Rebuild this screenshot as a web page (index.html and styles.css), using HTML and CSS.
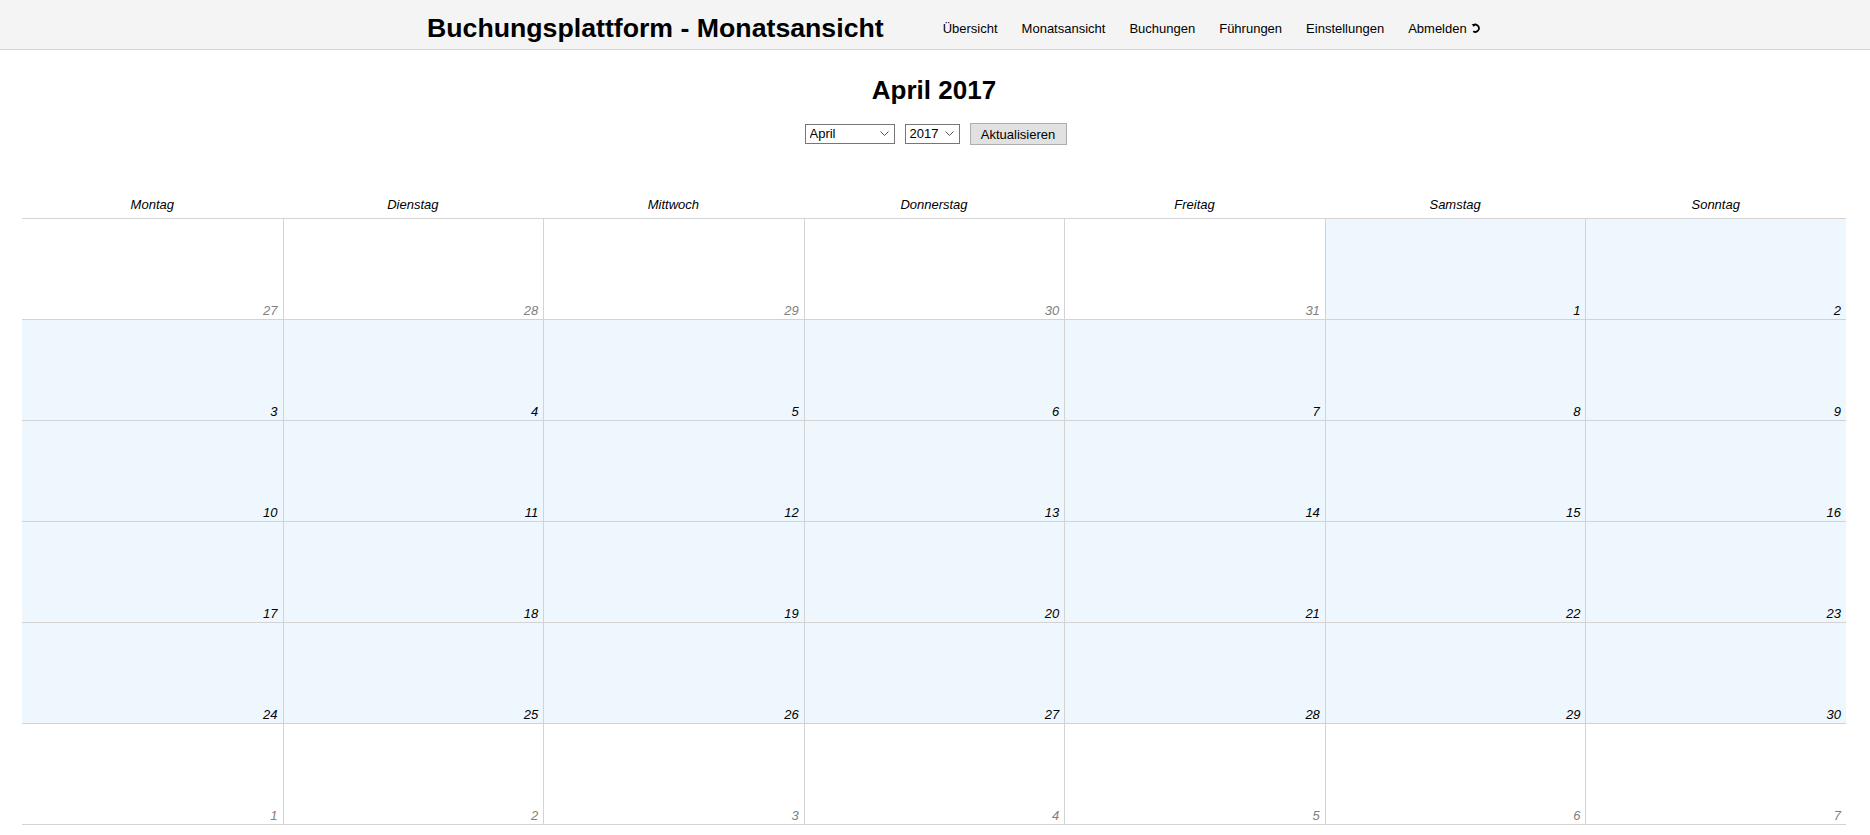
FILE: index.html
```html
<!DOCTYPE html>
<html lang="de">
<head>
<meta charset="utf-8">
<title>Buchungsplattform - Monatsansicht</title>
<link rel="stylesheet" href="styles.css">
</head>
<body>
<header class="topbar">
  <div class="topbar-inner">
    <div class="brand">Buchungsplattform - Monatsansicht</div>
    <nav class="nav">
      <a href="#">Übersicht</a>
      <a href="#">Monatsansicht</a>
      <a href="#">Buchungen</a>
      <a href="#">Führungen</a>
      <a href="#">Einstellungen</a>
      <a href="#">Abmelden <svg class="logout" width="10" height="10" viewBox="0 0 10 10" aria-hidden="true"><path d="M2.2 2.3 A3.6 3.6 0 1 1 2.2 8.2" fill="none" stroke="#000" stroke-width="1.7"/><path d="M0.6 1.2 L4.2 0.9 L3.0 4.0 Z" fill="#000"/></svg></a>
    </nav>
  </div>
</header>
<main class="page">
  <h1 class="month-title">April 2017</h1>
  <form class="controls">
    <span class="sel-wrap">
      <select class="sel sel-month">
        <option>Januar</option><option>Februar</option><option>März</option>
        <option selected>April</option><option>Mai</option><option>Juni</option>
        <option>Juli</option><option>August</option><option>September</option>
        <option>Oktober</option><option>November</option><option>Dezember</option>
      </select>
      <svg class="chev" width="9" height="5" viewBox="0 0 9 5" aria-hidden="true"><polyline points="0.5,0.5 4.5,4.5 8.5,0.5" fill="none" stroke="#555" stroke-width="1"/></svg>
    </span>
    <span class="sel-wrap">
      <select class="sel sel-year">
        <option>2016</option><option selected>2017</option><option>2018</option>
      </select>
      <svg class="chev" width="9" height="5" viewBox="0 0 9 5" aria-hidden="true"><polyline points="0.5,0.5 4.5,4.5 8.5,0.5" fill="none" stroke="#555" stroke-width="1"/></svg>
    </span>
    <button type="button" class="btn">Aktualisieren</button>
  </form>
  <div class="weekdays">
    <div>Montag</div><div>Dienstag</div><div>Mittwoch</div><div>Donnerstag</div><div>Freitag</div><div>Samstag</div><div>Sonntag</div>
  </div>
  <div class="calendar">
    <div class="cell other"><span>27</span></div>
    <div class="cell other"><span>28</span></div>
    <div class="cell other"><span>29</span></div>
    <div class="cell other"><span>30</span></div>
    <div class="cell other"><span>31</span></div>
    <div class="cell cur"><span>1</span></div>
    <div class="cell cur"><span>2</span></div>

    <div class="cell cur"><span>3</span></div>
    <div class="cell cur"><span>4</span></div>
    <div class="cell cur"><span>5</span></div>
    <div class="cell cur"><span>6</span></div>
    <div class="cell cur"><span>7</span></div>
    <div class="cell cur"><span>8</span></div>
    <div class="cell cur"><span>9</span></div>

    <div class="cell cur"><span>10</span></div>
    <div class="cell cur"><span>11</span></div>
    <div class="cell cur"><span>12</span></div>
    <div class="cell cur"><span>13</span></div>
    <div class="cell cur"><span>14</span></div>
    <div class="cell cur"><span>15</span></div>
    <div class="cell cur"><span>16</span></div>

    <div class="cell cur"><span>17</span></div>
    <div class="cell cur"><span>18</span></div>
    <div class="cell cur"><span>19</span></div>
    <div class="cell cur"><span>20</span></div>
    <div class="cell cur"><span>21</span></div>
    <div class="cell cur"><span>22</span></div>
    <div class="cell cur"><span>23</span></div>

    <div class="cell cur"><span>24</span></div>
    <div class="cell cur"><span>25</span></div>
    <div class="cell cur"><span>26</span></div>
    <div class="cell cur"><span>27</span></div>
    <div class="cell cur"><span>28</span></div>
    <div class="cell cur"><span>29</span></div>
    <div class="cell cur"><span>30</span></div>

    <div class="cell other last"><span>1</span></div>
    <div class="cell other last"><span>2</span></div>
    <div class="cell other last"><span>3</span></div>
    <div class="cell other last"><span>4</span></div>
    <div class="cell other last"><span>5</span></div>
    <div class="cell other last"><span>6</span></div>
    <div class="cell other last"><span>7</span></div>
  </div>
</main>
</body>
</html>
```

FILE: styles.css
```css
* { box-sizing: border-box; }

html, body {
  margin: 0;
  padding: 0;
  background: #fff;
  font-family: "Liberation Sans", Arial, sans-serif;
  color: #000;
}

.topbar {
  background: #f4f4f4;
  border-bottom: 1px solid #d3d3d3;
  height: 50px;
  padding-top: 7px;
}

.topbar-inner {
  display: flex;
  align-items: center;
  height: 42px;
  padding-left: 427px;
}

.brand {
  font-size: 26.7px;
  font-weight: bold;
  line-height: 31px;
  margin-right: 47px;
  white-space: nowrap;
}

.nav {
  display: flex;
  align-items: center;
}

.nav a {
  font-size: 13px;
  line-height: 15px;
  color: #000;
  text-decoration: none;
  padding: 0 12px;
  display: flex;
  align-items: center;
  white-space: pre;
}

.logout {
  margin-left: 1px;
  margin-top: -1px;
}

.page {
  padding: 0 24px 0 22px;
}

.month-title {
  margin: 25px 0 0;
  text-align: center;
  font-size: 26px;
  line-height: 30px;
  font-weight: bold;
}

.controls {
  margin: 18px 0 0;
  padding-left: 3px;
  display: flex;
  justify-content: center;
  align-items: center;
  gap: 10px;
  height: 22px;
}

.sel-wrap {
  position: relative;
  display: inline-flex;
}

.sel {
  -webkit-appearance: none;
  appearance: none;
  font-family: "Liberation Sans", Arial, sans-serif;
  font-size: 13px;
  line-height: 18px;
  height: 20px;
  border: 1px solid #767676;
  border-radius: 0;
  background-color: #fff;
  color: #000;
  padding: 0 0 0 4px;
  margin: 0;
}

.chev {
  position: absolute;
  right: 6px;
  top: 7px;
  pointer-events: none;
}

.sel-month { width: 90px; }
.sel-year { width: 55px; }

.btn {
  font-family: "Liberation Sans", Arial, sans-serif;
  font-size: 13px;
  height: 22px;
  width: 97px;
  padding: 0;
  margin: 0;
  background: #e1e1e1;
  border: 1px solid #adadad;
  border-radius: 0;
  color: #000;
}

.weekdays {
  margin-top: 52px;
  display: grid;
  grid-template-columns: repeat(7, 1fr);
}

.weekdays div {
  text-align: center;
  font-style: italic;
  font-size: 13px;
  line-height: 15px;
  padding-bottom: 6px;
}

.calendar {
  display: grid;
  grid-template-columns: repeat(7, 1fr);
}

.cell {
  height: 101px;
  border-top: 1px solid #d3d3d3;
  border-left: 1px solid #d3d3d3;
  display: flex;
  align-items: flex-end;
  justify-content: flex-end;
  padding: 0 5px 1px 0;
  font-style: italic;
  font-size: 13px;
  line-height: 15px;
}

.cell:nth-child(7n+1) { border-left: none; }

.cell.last {
  height: 102px;
  border-bottom: 1px solid #d3d3d3;
}

.cell.cur {
  background: #eef7fe;
  color: #000;
}

.cell.other {
  background: #fff;
  color: #808080;
}
```
